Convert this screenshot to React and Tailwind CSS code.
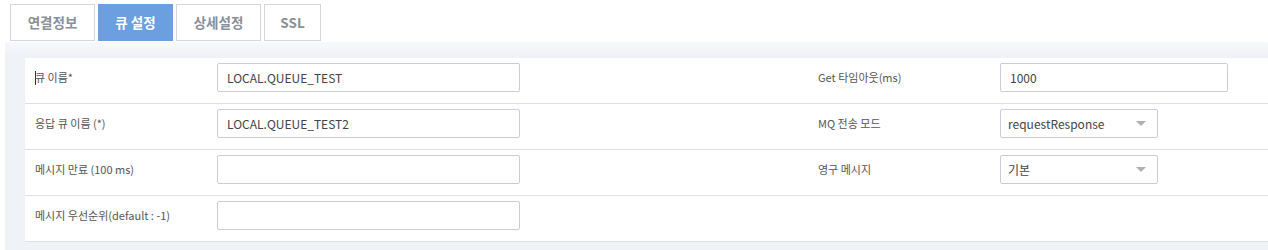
import React from 'react'

const font = { fontFamily: '"Noto Sans CJK KR", "Noto Sans", sans-serif' }

const tabs = ['연결정보', '큐 설정', '상세설정', 'SSL']

function TextInput({ value, width }) {
  return (
    <div className={`h-[29px] ${width} border border-[#c9ced6] rounded-[2px] bg-white flex items-center px-[9px] text-[12px] text-[#444]`}>
      {value}
    </div>
  )
}

function Select({ value }) {
  return (
    <div className="h-[29px] w-[158px] border border-[#c9ced6] rounded-[2px] bg-white flex items-center justify-between pl-[7px] pr-[11px] text-[12px] text-[#444]">
      <span>{value}</span>
      <span className="w-0 h-0 border-l-[5px] border-r-[5px] border-t-[5px] border-l-transparent border-r-transparent border-t-[#abb0b9]" />
    </div>
  )
}

function Row({ left, right }) {
  return (
    <div className="flex h-[46px] border-b border-[#dcdfe4]">
      <div className="w-[783px] flex items-start pt-[5px] pl-[10px]">
        <div className="w-[182px] h-[29px] flex items-center text-[11px] text-[#555]">{left.label}</div>
        {left.input}
      </div>
      <div className="flex-1 flex items-start pt-[5px] pl-[10px]">
        {right && (
          <>
            <div className="w-[182px] h-[29px] flex items-center text-[11px] text-[#555]">{right.label}</div>
            {right.input}
          </>
        )}
      </div>
    </div>
  )
}

export default function App() {
  return (
    <div className="w-[1268px] h-[250px] bg-white overflow-hidden" style={font}>
      <div className="flex gap-[3px] pl-[10px] pt-[4px] h-[42px]">
        {tabs.map((t, i) => (
          <div
            key={t}
            className={`h-[37px] flex items-center justify-center text-[13.5px] font-bold border ${
              i === 1
                ? 'bg-[#6b9fdf] border-[#6b9fdf] text-white w-[75px]'
                : 'bg-white border-[#d3d6db] text-[#8a8f98] ' + (i === 3 ? 'w-[57px]' : 'w-[85px]')
            }`}
          >
            {t}
          </div>
        ))}
      </div>
      <div className="ml-[5px] h-[208px] bg-gradient-to-b from-[#f8f9fb] to-[#eff2f6] to-[14px] pt-[16px] pl-[20px]">
        <div className="bg-white">
          <Row
            left={{
              label: (
                <span className="flex items-center">
                  <span className="w-px h-[14px] bg-[#333] mr-[-1px]" />
                  큐 이름*
                </span>
              ),
              input: <TextInput value="LOCAL.QUEUE_TEST" width="w-[303px]" />,
            }}
            right={{ label: 'Get 타임아웃(ms)', input: <TextInput value="1000" width="w-[228px]" /> }}
          />
          <Row
            left={{ label: '응답 큐 이름 (*)', input: <TextInput value="LOCAL.QUEUE_TEST2" width="w-[303px]" /> }}
            right={{ label: 'MQ 전송 모드', input: <Select value="requestResponse" /> }}
          />
          <Row
            left={{ label: '메시지 만료 (100 ms)', input: <TextInput value="" width="w-[303px]" /> }}
            right={{ label: '영구 메시지', input: <Select value="기본" /> }}
          />
          <Row
            left={{ label: '메시지 우선순위(default : -1)', input: <TextInput value="" width="w-[303px]" /> }}
          />
        </div>
      </div>
    </div>
  )
}
